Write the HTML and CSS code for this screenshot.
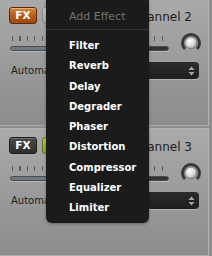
FILE: index.html
```html
<!DOCTYPE html>
<html>
<head>
<meta charset="utf-8">
<link rel="stylesheet" href="styles.css">
</head>
<body>
<div class="stage">
  <div class="panel first">
    <div class="row head">
      <div class="fx fx-on">FX</div>
      <div class="tog tog-grey"></div>
      <span class="name">Channel 2</span>
    </div>
    <div class="row mid">
      <div class="slider"><div class="ticks"></div><div class="track"></div></div>
      <svg class="knob" width="22" height="22" viewBox="0 0 22 22">
        <defs>
          <radialGradient id="ball1" cx="0.4" cy="0.35" r="0.7">
            <stop offset="0" stop-color="#fdfdfd"/>
            <stop offset="0.6" stop-color="#d6d6d6"/>
            <stop offset="1" stop-color="#8a8a8a"/>
          </radialGradient>
        </defs>
        <path d="M4.99 17.01 A8.5 8.5 0 1 1 17.01 17.01" fill="none" stroke="#383838" stroke-width="3"/>
        <circle cx="11" cy="11" r="5.8" fill="url(#ball1)" stroke="#6a6a6a" stroke-width="0.6"/>
      </svg>
    </div>
    <div class="row auto">
      <span class="label">Automation</span>
      <div class="select">
        <svg class="arrows" width="7" height="10" viewBox="0 0 7 10"><path d="M3.5 0.5 L6.5 4 L0.5 4 Z M0.5 6 L6.5 6 L3.5 9.5 Z" fill="#a8a8a8"/></svg>
      </div>
    </div>
  </div>
  <div class="panel">
    <div class="row head">
      <div class="fx fx-off">FX</div>
      <div class="tog tog-green"></div>
      <span class="name">Channel 3</span>
    </div>
    <div class="row mid">
      <div class="slider"><div class="ticks"></div><div class="track"></div></div>
      <svg class="knob" width="22" height="22" viewBox="0 0 22 22">
        <defs>
          <radialGradient id="ball2" cx="0.4" cy="0.35" r="0.7">
            <stop offset="0" stop-color="#fdfdfd"/>
            <stop offset="0.6" stop-color="#d6d6d6"/>
            <stop offset="1" stop-color="#8a8a8a"/>
          </radialGradient>
        </defs>
        <path d="M4.99 17.01 A8.5 8.5 0 1 1 17.01 17.01" fill="none" stroke="#383838" stroke-width="3"/>
        <circle cx="11" cy="11" r="5.8" fill="url(#ball2)" stroke="#6a6a6a" stroke-width="0.6"/>
      </svg>
    </div>
    <div class="row auto">
      <span class="label">Automation</span>
      <div class="select">
        <svg class="arrows" width="7" height="10" viewBox="0 0 7 10"><path d="M3.5 0.5 L6.5 4 L0.5 4 Z M0.5 6 L6.5 6 L3.5 9.5 Z" fill="#a8a8a8"/></svg>
      </div>
    </div>
  </div>
  <div class="menu">
    <div class="menu-head">Add Effect</div>
    <ul class="items">
      <li>Filter</li>
      <li>Reverb</li>
      <li>Delay</li>
      <li>Degrader</li>
      <li>Phaser</li>
      <li>Distortion</li>
      <li>Compressor</li>
      <li>Equalizer</li>
      <li>Limiter</li>
    </ul>
  </div>
</div>
</body>
</html>
```
FILE: styles.css
```css
html, body {
  margin: 0;
  padding: 0;
}
body {
  background: #8f8f8f;
  font-family: "DejaVu Sans", "Liberation Sans", sans-serif;
}
.stage {
  position: relative;
  width: 212px;
  height: 256px;
  overflow: hidden;
  background: #8e8e8e;
}
.panel {
  box-sizing: border-box;
  width: 209px;
  height: 128px;
  margin-bottom: 2px;
  border-top: 1px solid #b3b3b3;
  border-bottom: 1px solid #a9a9a9;
  border-right: 1px solid #b4b4b4;
  background: linear-gradient(#aaaaaa, #8c8c8c);
  padding: 8px 0 0 9px;
  display: flex;
  flex-direction: column;
}
.panel.first {
  margin-top: -2px;
}
.row {
  display: flex;
  align-items: center;
}
.head {
  height: 17px;
  align-items: flex-start;
}
.fx {
  box-sizing: border-box;
  width: 28px;
  height: 17px;
  border-radius: 3px;
  color: #fff;
  font-weight: bold;
  font-size: 10.5px;
  line-height: 15px;
  text-align: center;
}
.fx-on {
  border: 1px solid #5a2a08;
  background: linear-gradient(#d9853a, #b3591a 55%, #9c470f);
  box-shadow: inset 0 1px 0 rgba(255, 220, 170, 0.5);
}
.fx-off {
  border: 1px solid #1e1e1e;
  background: linear-gradient(#4a4a4a, #2e2e2e);
  box-shadow: inset 0 1px 0 rgba(255, 255, 255, 0.2);
}
.tog {
  box-sizing: border-box;
  width: 20px;
  height: 17px;
  margin-left: 5px;
  border-radius: 3px;
}
.tog-grey {
  border: 1px solid #8a8a8a;
  background: linear-gradient(#c8c8c8, #a8a8a8);
}
.tog-green {
  border: 1px solid #5f7312;
  background: linear-gradient(#b7cf4a, #8ea52a);
}
.name {
  margin-left: auto;
  margin-right: 16px;
  margin-top: 3px;
  font-size: 12px;
  line-height: 14px;
  color: #1c1c1c;
}
.mid {
  margin-top: 8px;
  height: 22px;
}
.slider {
  width: 159px;
  margin-left: 1px;
  height: 15px;
  display: flex;
  flex-direction: column;
}
.ticks {
  height: 5px;
  margin: 0 0 0 2px;
  background: repeating-linear-gradient(to right, #5a5a5a 0, #5a5a5a 1px, transparent 1px, transparent 7.5px);
}
.track {
  box-sizing: border-box;
  height: 5px;
  margin-top: 5px;
  border: 1px solid #4c4c4c;
  border-radius: 3px;
  background: linear-gradient(to right, #6c7680 0, #7c868e 87%, #333 87%);
  box-shadow: 0 1px 0 rgba(255, 255, 255, 0.25);
}
.knob {
  margin-left: 11px;
  display: block;
}
.auto {
  margin-top: 8px;
  height: 17px;
}
.label {
  margin-left: 2px;
  font-size: 10px;
  color: #1c1c1c;
}
.select {
  box-sizing: border-box;
  margin-left: auto;
  margin-right: 9px;
  width: 112px;
  height: 17px;
  border-radius: 4px;
  background: linear-gradient(#2c2c2c, #1e1e1e);
  box-shadow: 0 1px 0 rgba(255, 255, 255, 0.25);
  display: flex;
  align-items: center;
  padding: 0 4px 0 7px;
}
.arrows {
  margin-left: auto;
  display: block;
}
.menu {
  position: absolute;
  left: 46px;
  top: 0;
  width: 103px;
  background: #1b1b1b;
  border-radius: 0 0 6px 6px;
  box-shadow: 0 1px 3px rgba(0, 0, 0, 0.35);
  padding-bottom: 4px;
}
.menu-head {
  box-sizing: border-box;
  height: 30px;
  padding: 4px 0 0 23px;
  display: flex;
  align-items: center;
  border-bottom: 1px solid #333;
  color: #727272;
  font-size: 11px;
}
.items {
  list-style: none;
  margin: 0;
  padding: 6px 0 0 0;
}
.items li {
  padding-left: 23px;
  line-height: 20.3px;
  font-size: 10px;
  font-weight: bold;
  color: #fff;
}
```
